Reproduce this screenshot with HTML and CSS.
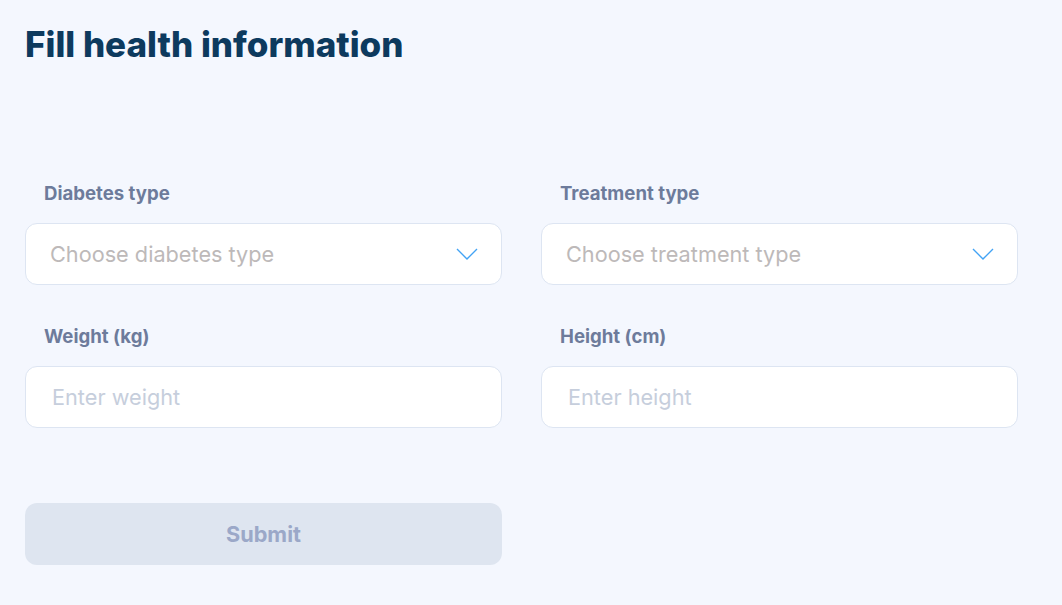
FILE: index.html
```html
<!DOCTYPE html>
<html lang="en">
<head>
    <meta charset="UTF-8">
    <title>Fill health information</title>
    <link rel="stylesheet" href="styles.css">
</head>
<body>
    <main class="page">
        <h1 class="title">Fill health information</h1>

        <form class="health-form">
            <div class="field">
                <label class="field-label">Diabetes type</label>
                <div class="select-box">
                    <span class="select-placeholder">Choose diabetes type</span>
                    <svg class="chevron" width="22" height="12" viewBox="0 0 22 12">
                        <path d="M1 1 L11 11 L21 1" fill="none" stroke="#42a3f5" stroke-width="1.4"/>
                    </svg>
                </div>
            </div>

            <div class="field">
                <label class="field-label">Treatment type</label>
                <div class="select-box">
                    <span class="select-placeholder">Choose treatment type</span>
                    <svg class="chevron" width="22" height="12" viewBox="0 0 22 12">
                        <path d="M1 1 L11 11 L21 1" fill="none" stroke="#42a3f5" stroke-width="1.4"/>
                    </svg>
                </div>
            </div>

            <div class="field">
                <label class="field-label" for="weight">Weight (kg)</label>
                <input class="text-input" type="text" id="weight" placeholder="Enter weight">
            </div>

            <div class="field">
                <label class="field-label" for="height">Height (cm)</label>
                <input class="text-input" type="text" id="height" placeholder="Enter height">
            </div>

            <button type="submit" class="submit-btn" disabled>Submit</button>
        </form>
    </main>
</body>
</html>
```

FILE: styles.css
```css
* {
    box-sizing: border-box;
}

body {
    margin: 0;
    background-color: #f4f7fe;
    font-family: Inter, 'Noto Sans', sans-serif;
}

.page {
    padding: 22px 25px 0;
}

.title {
    margin: 0;
    font-size: 35px;
    line-height: 44px;
    font-weight: 800;
    color: #0d3a5e;
}

.health-form {
    display: grid;
    grid-template-columns: 477px 477px;
    column-gap: 39px;
    row-gap: 40px;
    margin-top: 116px;
}

.field-label {
    display: block;
    padding-left: 19px;
    margin-bottom: 19px;
    font-size: 18.6px;
    line-height: 22px;
    font-weight: 700;
    color: #6d7b9b;
}

.select-box,
.text-input {
    width: 100%;
    height: 62px;
    background: #fff;
    border: 1px solid #dde5f2;
    border-radius: 12px;
}

.select-box {
    display: flex;
    align-items: center;
    justify-content: space-between;
    padding: 0 23px 0 24px;
}

.select-placeholder {
    font-size: 21.7px;
    color: #bdb9b9;
}

.text-input {
    padding: 0 26px;
    font-family: inherit;
    font-size: 21.7px;
    outline: none;
}

.text-input::placeholder {
    color: #c6cedc;
}

.submit-btn {
    grid-column: 1;
    margin-top: 35px;
    height: 62px;
    border: none;
    border-radius: 12px;
    background-color: #dee5f0;
    color: #9ba8c8;
    font-family: inherit;
    font-size: 21.7px;
    font-weight: 700;
}
```
